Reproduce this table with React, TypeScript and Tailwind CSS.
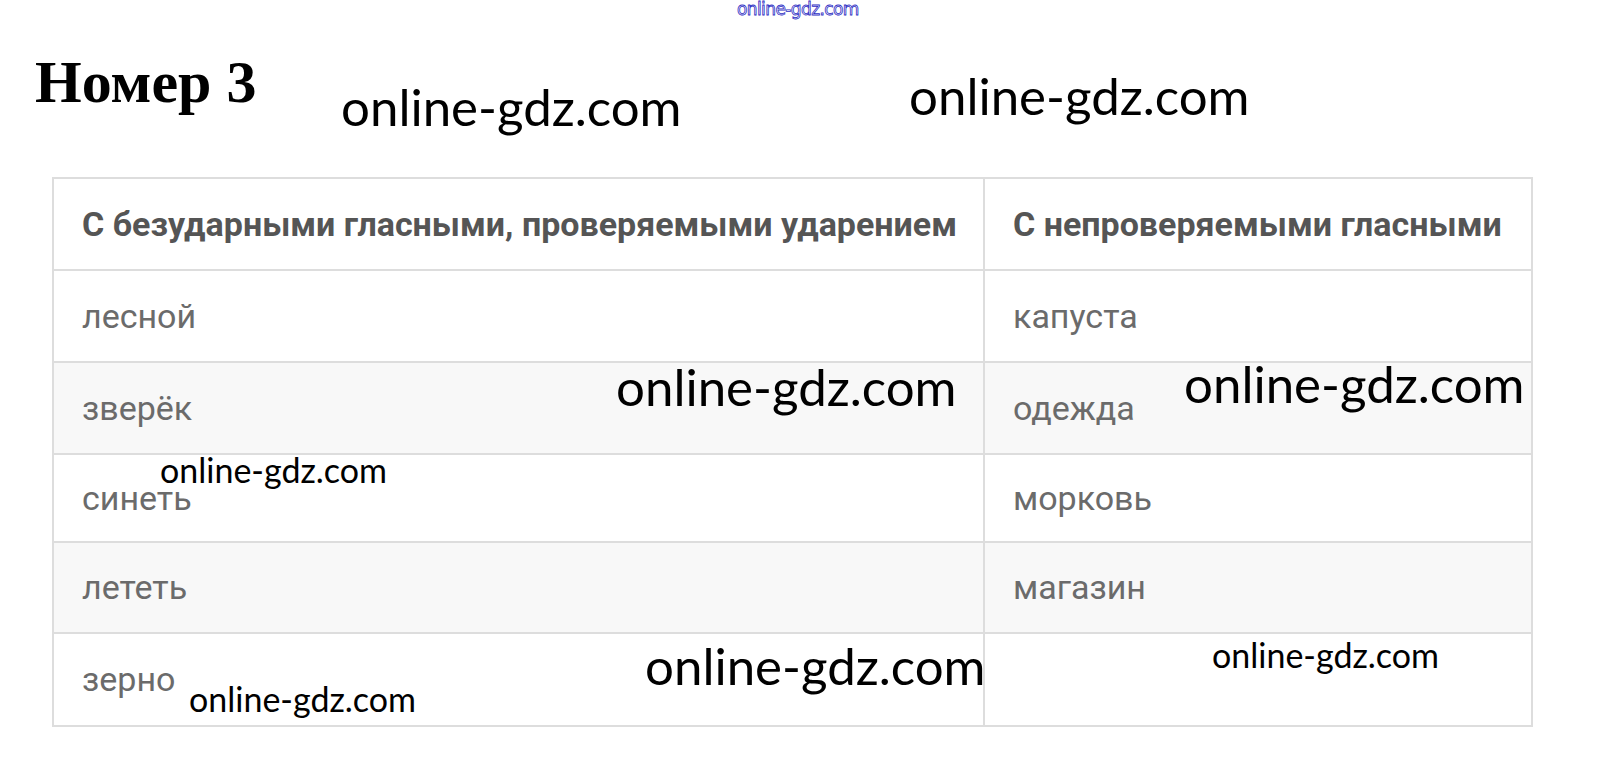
import React from 'react';

const rows: [string, string][] = [
  ['лесной', 'капуста'],
  ['зверёк', 'одежда'],
  ['синеть', 'морковь'],
  ['лететь', 'магазин'],
  ['зерно', ''],
];

const rowHeights = ['h-[92px]', 'h-[92px]', 'h-[88px]', 'h-[91px]', 'h-[93px]'];

const Mark: React.FC<{ className: string }> = ({ className }) => (
  <span
    className={`pointer-events-none absolute whitespace-nowrap leading-none text-black ${className}`}
    style={{ fontFamily: 'Lato, "Open Sans", sans-serif' }}
  >
    online-gdz.com
  </span>
);

const App: React.FC = () => {
  return (
    <div className="relative min-h-[769px] w-[1599px] bg-white">
      {/* tiny watermark at the top */}
      <div
        className="absolute left-[737px] top-[1px] text-[17px] leading-none tracking-[-0.6px] text-transparent [-webkit-text-stroke:0.8px_#2e2ec4]"
        style={{ fontFamily: '"DejaVu Sans", sans-serif' }}
      >
        online-gdz.com
      </div>

      <div className="pl-[35px] pt-[52px]">
        <h1
          className="text-[60px] font-bold leading-none text-black"
          style={{ fontFamily: '"Liberation Serif", "Times New Roman", serif' }}
        >
          Номер 3
        </h1>
      </div>

      <div className="ml-[52px] mt-[65px]">
        <table
          className="w-[1479px] table-fixed border-collapse border-2 border-[#dddddd]"
          style={{ fontFamily: 'Roboto, "Liberation Sans", sans-serif' }}
        >
          <colgroup>
            <col className="w-[931px]" />
            <col className="w-[548px]" />
          </colgroup>
          <thead>
            <tr className="h-[92px] bg-white">
              <th className="border-2 border-[#dddddd] pl-[28px] text-left text-[34px] font-bold text-[#555555]">
                С безударными гласными, проверяемыми ударением
              </th>
              <th className="border-2 border-[#dddddd] pl-[28px] text-left text-[34px] font-bold text-[#555555]">
                С непроверяемыми гласными
              </th>
            </tr>
          </thead>
          <tbody>
            {rows.map(([a, b], i) => (
              <tr key={a} className={`${rowHeights[i]} ${i % 2 === 1 ? 'bg-[#f8f8f8]' : 'bg-white'}`}>
                <td className="border-2 border-[#dddddd] pl-[28px] text-[34px] text-[#6b6b6b]">{a}</td>
                <td className="border-2 border-[#dddddd] pl-[28px] text-[34px] text-[#6b6b6b]">{b}</td>
              </tr>
            ))}
          </tbody>
        </table>
      </div>

      <Mark className="left-[341px] top-[81px] text-[51px]" />
      <Mark className="left-[909px] top-[70px] text-[51px]" />
      <Mark className="left-[616px] top-[361px] text-[51px]" />
      <Mark className="left-[1184px] top-[358px] text-[51px]" />
      <Mark className="left-[645px] top-[640px] text-[51px]" />
      <Mark className="left-[160px] top-[453px] text-[34px]" />
      <Mark className="left-[1212px] top-[638px] text-[34px]" />
      <Mark className="left-[189px] top-[682px] text-[34px]" />
    </div>
  );
};

export default App;
